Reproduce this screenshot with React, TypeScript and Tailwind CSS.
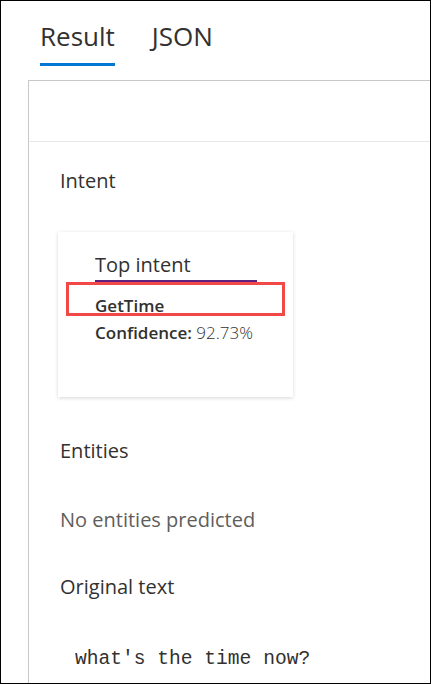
import React from "react";

export default function App() {
  return (
    <div
      className="w-[431px] h-[684px] border border-black bg-white overflow-hidden text-[#323130]"
      style={{ fontFamily: '"Open Sans", "Noto Sans", sans-serif' }}
    >
      {/* Tabs */}
      <div className="flex pl-[39px] pt-[15px] gap-[37px]">
        <div className="flex flex-col">
          <span className="text-[26px] leading-[40px]">Result</span>
          <div className="mt-[7px] h-[3px] bg-[#0078d4]" />
        </div>
        <div className="flex flex-col">
          <span className="text-[26px] leading-[40px]">JSON</span>
        </div>
      </div>

      {/* Panel */}
      <div className="ml-[27px] mt-[14px] border-l border-t border-[#c8c8c8] h-[620px]">
        <div className="h-[61px] border-b border-[#e8e8e8]" />
        <div className="pl-[31px]">
          <div className="mt-[25px] text-[20px] leading-[28px]">Intent</div>

          <div className="relative mt-[37px] -ml-[2px] w-[235px] h-[165px] bg-white shadow-[0_1px_4px_rgba(0,0,0,0.16)] pt-[19px] pl-[37px]">
            <div className="absolute left-[8px] top-[50px] w-[219px] h-[34px] border-[3px] border-[#f34848]" />
            <div className="inline-block">
              <div className="text-[20px] leading-[28px] w-[162px]">Top intent</div>
              <div className="h-[2px] w-[162px] bg-[#5c2080] mt-[1px]" />
            </div>
            <div className="text-[17px] leading-[27px] mt-[10px]">
              <div className="font-semibold">GetTime</div>
              <div>
                <span className="font-semibold">Confidence:</span>{" "}
                <span className="font-light">92.73%</span>
              </div>
            </div>
          </div>

          <div className="mt-[40px] text-[20px] leading-[28px]">Entities</div>
          <div className="mt-[41px] text-[20px] leading-[28px] text-[#605e5c]">No entities predicted</div>
          <div className="mt-[39px] text-[20px] leading-[28px]">Original text</div>
          <div
            className="mt-[44px] ml-[15px] text-[19.6px] leading-[28px]"
            style={{ fontFamily: '"Liberation Mono", "DejaVu Sans Mono", monospace' }}
          >
            what's the time now?
          </div>
        </div>
      </div>
    </div>
  );
}
